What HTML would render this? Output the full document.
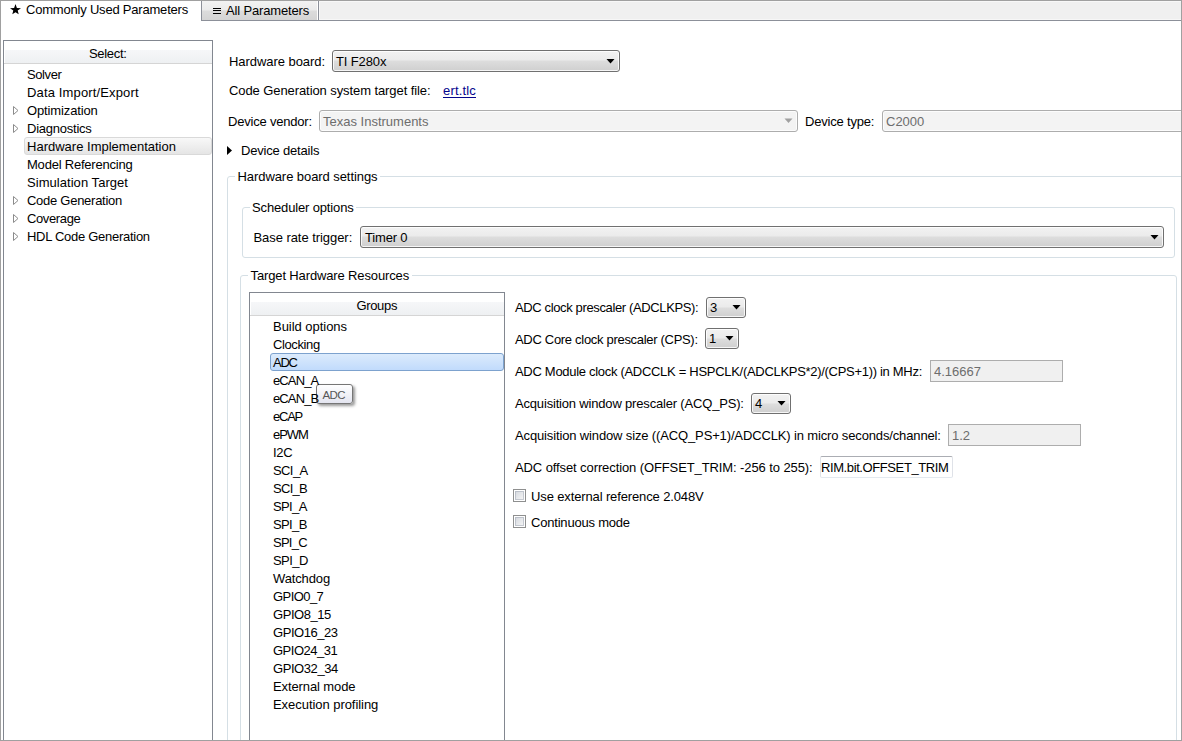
<!DOCTYPE html>
<html><head><meta charset="utf-8"><style>
html,body{margin:0;padding:0;width:1182px;height:741px;overflow:hidden;background:#fff;position:relative}
.t{position:absolute;font-family:'Liberation Sans', sans-serif;font-size:13px;line-height:16px;white-space:pre;color:#000}
</style></head><body>
<div style="position:absolute;left:318px;top:0px;width:864px;height:21px;box-sizing:border-box;background:#f0f0f0;border-top:1px solid #a0a0a0;border-bottom:1px solid #8c9099;border-left:1px solid #8c9099;box-shadow:inset 1px 1px 0 #f8f8f8,inset 0 -1px 0 #f7f7f7"></div><div style="position:absolute;left:201px;top:0px;width:118px;height:21px;box-sizing:border-box;background:linear-gradient(#f2f2f2 0,#ebebeb 9px,#dcdcdc 10px,#d4d4d4 100%);border:1px solid #8c9099;border-top-color:#a0a0a0;box-shadow:inset -1px 0 0 #fff"></div><div style="position:absolute;left:213px;top:8px;width:8px;height:1px;box-sizing:border-box;background:#000"></div><div style="position:absolute;left:213px;top:10px;width:8px;height:1px;box-sizing:border-box;background:#000"></div><div style="position:absolute;left:213px;top:13px;width:8px;height:1px;box-sizing:border-box;background:#000"></div><svg style="position:absolute;left:9px;top:3px" width="14" height="13" viewBox="0 0 14 13"><polygon points="6.5,1 7.9,4.9 12,5.2 8.7,7.6 9.7,11.3 6.5,9.2 3.3,11.3 4.3,7.6 1,5.2 5.1,4.9" fill="#000"/></svg><div style="position:absolute;left:3px;top:40px;width:210px;height:702px;box-sizing:border-box;border:1px solid #828790;background:#fff"></div><div style="position:absolute;left:4px;top:50px;width:208px;height:14px;box-sizing:border-box;background:linear-gradient(#f6f7f9,#eef0f2) 1px 0/207px 13px no-repeat;border-bottom:1px solid #d5d5d5"></div><div style="position:absolute;left:24px;top:137px;width:188px;height:18px;box-sizing:border-box;border:1px solid #d9d9d9;border-radius:3px;background:linear-gradient(#f8f8f8,#e5e5e5)"></div><svg style="position:absolute;left:12px;top:105px" width="8" height="11" viewBox="0 0 8 11"><polygon points="1.5,1.5 6,5.5 1.5,9.5" fill="none" stroke="#8c8c8c" stroke-width="1"/></svg><svg style="position:absolute;left:12px;top:123px" width="8" height="11" viewBox="0 0 8 11"><polygon points="1.5,1.5 6,5.5 1.5,9.5" fill="none" stroke="#8c8c8c" stroke-width="1"/></svg><svg style="position:absolute;left:12px;top:195px" width="8" height="11" viewBox="0 0 8 11"><polygon points="1.5,1.5 6,5.5 1.5,9.5" fill="none" stroke="#8c8c8c" stroke-width="1"/></svg><svg style="position:absolute;left:12px;top:213px" width="8" height="11" viewBox="0 0 8 11"><polygon points="1.5,1.5 6,5.5 1.5,9.5" fill="none" stroke="#8c8c8c" stroke-width="1"/></svg><svg style="position:absolute;left:12px;top:231px" width="8" height="11" viewBox="0 0 8 11"><polygon points="1.5,1.5 6,5.5 1.5,9.5" fill="none" stroke="#8c8c8c" stroke-width="1"/></svg><div style="position:absolute;left:332px;top:50px;width:288px;height:22px;box-sizing:border-box;border:1px solid #707070;border-radius:3px;background:linear-gradient(#f2f2f2 0,#ebebeb 9px,#dddddd 10px,#cfcfcf 100%);box-shadow:inset 0 0 0 1px rgba(255,255,255,.8)"></div><svg style="position:absolute;left:606px;top:59px" width="9" height="6"><polygon points="0.5,0 8.5,0 4.5,4.5" fill="#000"/></svg><div style="position:absolute;left:443px;top:97px;width:33px;height:1px;box-sizing:border-box;background:#05058c"></div><div style="position:absolute;left:319px;top:110px;width:479px;height:22px;box-sizing:border-box;border:1px solid #adadad;border-radius:3px;background:#f3f3f3;box-shadow:inset 0 0 0 1px #fcfcfc"></div><svg style="position:absolute;left:784px;top:118px" width="9" height="6"><polygon points="0.5,0.5 8.5,0.5 4.5,5" fill="#a0a0a0"/></svg><div style="position:absolute;left:882px;top:110px;width:310px;height:22px;box-sizing:border-box;border:1px solid #adadad;border-radius:3px;background:#f3f3f3;box-shadow:inset 0 0 0 1px #fcfcfc"></div><svg style="position:absolute;left:226px;top:145px" width="7" height="11"><polygon points="1,1 6,5.5 1,10" fill="#000"/></svg><div style="position:absolute;left:227px;top:176px;width:1000px;height:700px;box-sizing:border-box;border:1px solid #d5dfe5;border-radius:3px"></div><div style="position:absolute;left:235px;top:170px;width:145px;height:12px;box-sizing:border-box;background:#fff"></div><div style="position:absolute;left:242px;top:207px;width:933px;height:51px;box-sizing:border-box;border:1px solid #d5dfe5;border-radius:3px"></div><div style="position:absolute;left:250px;top:201px;width:106px;height:12px;box-sizing:border-box;background:#fff"></div><div style="position:absolute;left:360px;top:226px;width:804px;height:22px;box-sizing:border-box;border:1px solid #707070;border-radius:3px;background:linear-gradient(#f2f2f2 0,#ebebeb 9px,#dddddd 10px,#cfcfcf 100%);box-shadow:inset 0 0 0 1px rgba(255,255,255,.8)"></div><svg style="position:absolute;left:1150px;top:235px" width="9" height="6"><polygon points="0.5,0 8.5,0 4.5,4.5" fill="#000"/></svg><div style="position:absolute;left:240px;top:275px;width:937px;height:600px;box-sizing:border-box;border:1px solid #d5dfe5;border-radius:3px"></div><div style="position:absolute;left:248px;top:269px;width:164px;height:12px;box-sizing:border-box;background:#fff"></div><div style="position:absolute;left:249px;top:292px;width:256px;height:460px;box-sizing:border-box;border:1px solid #828790;background:#fff"></div><div style="position:absolute;left:250px;top:302px;width:254px;height:14px;box-sizing:border-box;background:linear-gradient(#f6f7f9,#eef0f2) 1px 0/253px 13px no-repeat;border-bottom:1px solid #d5d5d5"></div><div style="position:absolute;left:270px;top:353px;width:234px;height:18px;box-sizing:border-box;border:1px solid #7da2ce;border-radius:3px;background:linear-gradient(#dcebfc,#c1dbfc)"></div><div style="position:absolute;left:316px;top:384px;width:37px;height:20px;box-sizing:border-box;border:1px solid #767676;border-radius:3px;background:linear-gradient(#fff,#e4e5f0);box-shadow:2px 2px 3px rgba(0,0,0,.4)"></div><div style="position:absolute;left:706px;top:297px;width:40px;height:21px;box-sizing:border-box;border:1px solid #707070;border-radius:3px;background:linear-gradient(#f2f2f2 0,#ebebeb 9px,#dddddd 10px,#cfcfcf 100%);box-shadow:inset 0 0 0 1px rgba(255,255,255,.8)"></div><svg style="position:absolute;left:732px;top:305px" width="9" height="6"><polygon points="0.5,0 8.5,0 4.5,4.5" fill="#000"/></svg><div style="position:absolute;left:705px;top:328px;width:34px;height:21px;box-sizing:border-box;border:1px solid #707070;border-radius:3px;background:linear-gradient(#f2f2f2 0,#ebebeb 9px,#dddddd 10px,#cfcfcf 100%);box-shadow:inset 0 0 0 1px rgba(255,255,255,.8)"></div><svg style="position:absolute;left:725px;top:336px" width="9" height="6"><polygon points="0.5,0 8.5,0 4.5,4.5" fill="#000"/></svg><div style="position:absolute;left:930px;top:360px;width:133px;height:22px;box-sizing:border-box;border:1px solid #adadad;background:#f0f0f0"></div><div style="position:absolute;left:751px;top:393px;width:40px;height:21px;box-sizing:border-box;border:1px solid #707070;border-radius:3px;background:linear-gradient(#f2f2f2 0,#ebebeb 9px,#dddddd 10px,#cfcfcf 100%);box-shadow:inset 0 0 0 1px rgba(255,255,255,.8)"></div><svg style="position:absolute;left:777px;top:401px" width="9" height="6"><polygon points="0.5,0 8.5,0 4.5,4.5" fill="#000"/></svg><div style="position:absolute;left:948px;top:424px;width:133px;height:22px;box-sizing:border-box;border:1px solid #adadad;background:#f0f0f0"></div><div style="position:absolute;left:820px;top:456px;width:133px;height:22px;box-sizing:border-box;border:1px solid #dfe2e8;border-top-color:#abadb3;border-bottom-color:#e3e9ef;border-radius:2px;background:#fff"></div><div style="position:absolute;left:513px;top:489px;width:13px;height:13px;box-sizing:border-box;border:1px solid #8e8f8f;background:#fff;box-shadow:inset 0 0 0 1px #fff"></div><div style="position:absolute;left:515px;top:491px;width:9px;height:9px;box-sizing:border-box;background:linear-gradient(135deg,#d3d7dd,#f7f7f7);box-shadow:inset 0 0 0 1px rgba(160,168,180,.55)"></div><div style="position:absolute;left:513px;top:515px;width:13px;height:13px;box-sizing:border-box;border:1px solid #8e8f8f;background:#fff;box-shadow:inset 0 0 0 1px #fff"></div><div style="position:absolute;left:515px;top:517px;width:9px;height:9px;box-sizing:border-box;background:linear-gradient(135deg,#d3d7dd,#f7f7f7);box-shadow:inset 0 0 0 1px rgba(160,168,180,.55)"></div><div style="position:absolute;left:0px;top:0px;width:1182px;height:741px;box-sizing:border-box;border:1px solid #a0a0a0;border-top:none;pointer-events:none"></div><div style="position:absolute;left:0px;top:0px;width:319px;height:1px;box-sizing:border-box;background:#a0a0a0"></div>
<div class="t" style="left:226px;top:3px;letter-spacing:-0.161px;">All Parameters</div><div class="t" style="left:26px;top:2px;letter-spacing:-0.204px;">Commonly Used Parameters</div><div class="t" style="left:89px;top:46px;letter-spacing:-0.321px;">Select:</div><div class="t" style="left:27px;top:67px;letter-spacing:-0.410px;">Solver</div><div class="t" style="left:27px;top:85px;letter-spacing:0.144px;">Data Import/Export</div><div class="t" style="left:27px;top:103px;letter-spacing:-0.129px;">Optimization</div><div class="t" style="left:27px;top:121px;letter-spacing:-0.237px;">Diagnostics</div><div class="t" style="left:27px;top:139px;letter-spacing:0.006px;">Hardware Implementation</div><div class="t" style="left:27px;top:157px;letter-spacing:-0.213px;">Model Referencing</div><div class="t" style="left:27px;top:175px;letter-spacing:0.046px;">Simulation Target</div><div class="t" style="left:27px;top:193px;letter-spacing:-0.268px;">Code Generation</div><div class="t" style="left:27px;top:211px;letter-spacing:-0.372px;">Coverage</div><div class="t" style="left:27px;top:229px;letter-spacing:-0.282px;">HDL Code Generation</div><div class="t" style="left:229px;top:54px;letter-spacing:-0.055px;">Hardware board:</div><div class="t" style="left:336px;top:54px;letter-spacing:-0.125px;">TI F280x</div><div class="t" style="left:229px;top:83px;letter-spacing:-0.086px;">Code Generation system target file:</div><div class="t" style="left:443px;top:83px;letter-spacing:0.172px;color:#05058c">ert.tlc</div><div class="t" style="left:228px;top:114px;letter-spacing:-0.208px;">Device vendor:</div><div class="t" style="left:323px;top:114px;color:#6d6d6d">Texas Instruments</div><div class="t" style="left:805px;top:114px;letter-spacing:-0.187px;">Device type:</div><div class="t" style="left:886px;top:114px;color:#6d6d6d">C2000</div><div class="t" style="left:241px;top:143px;letter-spacing:-0.196px;">Device details</div><div class="t" style="left:237.5px;top:169px;letter-spacing:-0.071px;">Hardware board settings</div><div class="t" style="left:252px;top:200px;letter-spacing:-0.146px;">Scheduler options</div><div class="t" style="left:253.4px;top:230px;letter-spacing:-0.051px;">Base rate trigger:</div><div class="t" style="left:365px;top:230px;letter-spacing:-0.183px;">Timer 0</div><div class="t" style="left:250.6px;top:268px;letter-spacing:-0.138px;">Target Hardware Resources</div><div class="t" style="left:356.4px;top:298px;letter-spacing:-0.323px;">Groups</div><div class="t" style="left:273px;top:319px;letter-spacing:-0.035px;">Build options</div><div class="t" style="left:273px;top:337px;letter-spacing:-0.382px;">Clocking</div><div class="t" style="left:273px;top:355px;letter-spacing:-1.218px;">ADC</div><div class="t" style="left:273px;top:373px;letter-spacing:-0.880px;">eCAN_A</div><div class="t" style="left:273px;top:391px;letter-spacing:-0.880px;">eCAN_B</div><div class="t" style="left:273px;top:409px;letter-spacing:-1.242px;">eCAP</div><div class="t" style="left:273px;top:427px;letter-spacing:-1.025px;">ePWM</div><div class="t" style="left:273px;top:445px;letter-spacing:-0.311px;">I2C</div><div class="t" style="left:273px;top:463px;letter-spacing:-0.596px;">SCI_A</div><div class="t" style="left:273px;top:481px;letter-spacing:-0.696px;">SCI_B</div><div class="t" style="left:273px;top:499px;letter-spacing:-0.612px;">SPI_A</div><div class="t" style="left:273px;top:517px;letter-spacing:-0.612px;">SPI_B</div><div class="t" style="left:273px;top:535px;letter-spacing:-0.756px;">SPI_C</div><div class="t" style="left:273px;top:553px;letter-spacing:-0.576px;">SPI_D</div><div class="t" style="left:273px;top:571px;letter-spacing:-0.133px;">Watchdog</div><div class="t" style="left:273px;top:589px;letter-spacing:-0.558px;">GPIO0_7</div><div class="t" style="left:273px;top:607px;letter-spacing:-0.442px;">GPIO8_15</div><div class="t" style="left:273px;top:625px;letter-spacing:-0.451px;">GPIO16_23</div><div class="t" style="left:273px;top:643px;letter-spacing:-0.506px;">GPIO24_31</div><div class="t" style="left:273px;top:661px;letter-spacing:-0.428px;">GPIO32_34</div><div class="t" style="left:273px;top:679px;letter-spacing:-0.110px;">External mode</div><div class="t" style="left:273px;top:697px;letter-spacing:-0.049px;">Execution profiling</div><div class="t" style="left:322.5px;top:387px;letter-spacing:-0.594px;color:#575757;font-size:11.5px">ADC</div><div class="t" style="left:515px;top:300px;letter-spacing:-0.368px;">ADC clock prescaler (ADCLKPS):</div><div class="t" style="left:710px;top:300px;">3</div><div class="t" style="left:515px;top:332px;letter-spacing:-0.305px;">ADC Core clock prescaler (CPS):</div><div class="t" style="left:709px;top:331px;">1</div><div class="t" style="left:515px;top:364px;letter-spacing:-0.299px;">ADC Module clock (ADCCLK = HSPCLK/(ADCLKPS*2)/(CPS+1)) in MHz:</div><div class="t" style="left:934px;top:364px;color:#6d6d6d">4.16667</div><div class="t" style="left:515px;top:396px;letter-spacing:-0.178px;">Acquisition window prescaler (ACQ_PS):</div><div class="t" style="left:755px;top:396px;">4</div><div class="t" style="left:515px;top:428px;letter-spacing:-0.138px;">Acquisition window size ((ACQ_PS+1)/ADCCLK) in micro seconds/channel:</div><div class="t" style="left:952px;top:428px;color:#6d6d6d">1.2</div><div class="t" style="left:515px;top:460px;letter-spacing:-0.101px;">ADC offset correction (OFFSET_TRIM: -256 to 255):</div><div class="t" style="left:821px;top:460px;letter-spacing:-0.403px;">RIM.bit.OFFSET_TRIM</div><div class="t" style="left:531px;top:489px;letter-spacing:-0.129px;">Use external reference 2.048V</div><div class="t" style="left:531px;top:515px;letter-spacing:-0.200px;">Continuous mode</div>
</body></html>
